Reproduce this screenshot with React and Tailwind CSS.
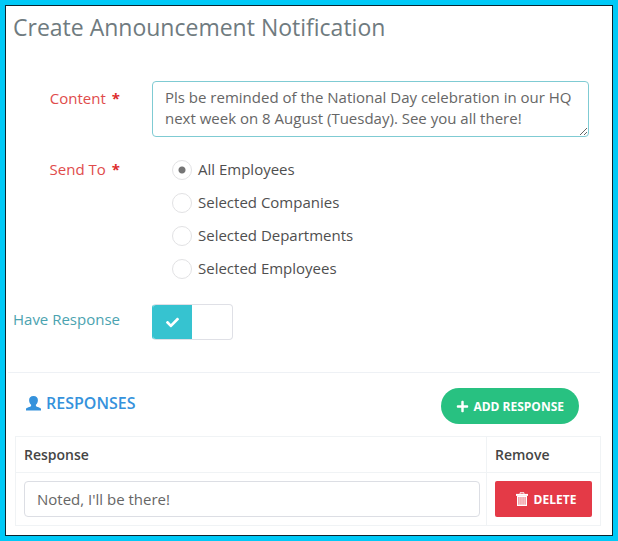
import React, { useState } from 'react';
import { FaCheck, FaPlus } from 'react-icons/fa';

const sendOptions = [
  { value: 'all', label: 'All Employees' },
  { value: 'companies', label: 'Selected Companies' },
  { value: 'departments', label: 'Selected Departments' },
  { value: 'employees', label: 'Selected Employees' }
];

const UserIcon = () => (
  <svg width="15" height="15" viewBox="0 0 15 15" fill="currentColor" aria-hidden="true">
    <path d="M7.500 0C10.400 0 12 1.700 11.900 4.200C11.800 6.200 11 7.800 9.900 8.700V10C10.300 10.900 15 11.400 15 13.200V14.500H0V13.200C0 11.400 4.700 10.900 5.100 10V8.700C4 7.800 3.200 6.200 3.100 4.200C3 1.700 4.600 0 7.500 0Z" />
  </svg>
);

const TrashIcon = () => (
  <svg width="12" height="15" viewBox="0 0 12 15" fill="none" stroke="currentColor" aria-hidden="true">
    <path d="M4 1.800V.8H8V1.800" />
    <path d="M0 2.900H12" strokeWidth="2" />
    <path d="M1.600 4.500H10.400V13.400H1.600Z" fill="currentColor" fillOpacity=".45" strokeWidth="1.200" />
    <path d="M3.900 5V13M6 5V13M8.100 5V13" strokeWidth="1" strokeOpacity=".7" />
  </svg>
);

const Required = () => <span className="ml-[6px] font-bold text-[#dd2c2c]">*</span>;

export default function App() {
  const [content, setContent] = useState(
    'Pls be reminded of the National Day celebration in our HQ next week on 8 August (Tuesday). See you all there!'
  );
  const [sendTo, setSendTo] = useState('all');
  const [haveResponse, setHaveResponse] = useState(true);
  const [responses, setResponses] = useState(["Noted, I'll be there!"]);

  const addResponse = () => setResponses([...responses, '']);
  const removeResponse = (index) => setResponses(responses.filter((_, i) => i !== index));
  const updateResponse = (index, value) => setResponses(responses.map((r, i) => (i === index ? value : r)));

  return (
    <div className="min-h-screen bg-[#00c9f7] p-[5px] pb-[6px] font-['Open_Sans',sans-serif] text-[15px] leading-[21px] text-[#4f4f4f]">
      <main className="border border-[#0b2530] bg-white pb-[9px]">
        <h1 className="px-[7px] pt-[5px] text-[23px] leading-8 text-[#6f7b80]">Create Announcement Notification</h1>

        <form>
          <div className="mt-[38px] grid grid-cols-[114px_1fr] gap-x-8 pr-[23px]">
            <label htmlFor="content" className="pt-[7px] text-right text-[#e04b4b]">
              Content<Required />
            </label>
            <textarea
              id="content"
              rows={2}
              value={content}
              onChange={(e) => setContent(e.target.value)}
              className="block h-14 w-full resize-y overflow-hidden rounded-[4px] border border-[#7fcbd3] px-3 py-[5px] text-[#666] outline-none"
            />
          </div>

          <fieldset className="mt-4 grid grid-cols-[114px_1fr] gap-x-8 pr-[23px]">
            <div id="send-to" className="pt-[6px] text-right text-[#e04b4b]">
              Send To<Required />
            </div>
            <div role="radiogroup" aria-labelledby="send-to" className="pl-5">
              {sendOptions.map((option) => (
                <label key={option.value} className="flex h-[33px] items-center gap-[6px]">
                  <input
                    type="radio"
                    name="sendTo"
                    value={option.value}
                    checked={sendTo === option.value}
                    onChange={() => setSendTo(option.value)}
                    className="size-5 shrink-0 appearance-none rounded-full border border-[#e2e2e4] bg-white checked:bg-[radial-gradient(circle,#757575_3px,transparent_4px)]"
                  />
                  {option.label}
                </label>
              ))}
            </div>
          </fieldset>

          <div className="mt-[19px] grid grid-cols-[114px_1fr] gap-x-8 pr-[23px]">
            <label htmlFor="have-response" className="pt-[5px] text-right whitespace-nowrap text-[#4ba3b0]">
              Have Response
            </label>
            <label className="flex h-9 w-[81px] overflow-hidden rounded-[4px] border border-[#dfe0e6] has-checked:border-l-[#36c3d0]">
              <input
                id="have-response"
                type="checkbox"
                checked={haveResponse}
                onChange={(e) => setHaveResponse(e.target.checked)}
                className="peer sr-only"
              />
              <span className="hidden w-[39px] items-center justify-center bg-[#36c3d0] text-white peer-checked:flex">
                <FaCheck size={13} />
              </span>
            </label>
          </div>
        </form>

        <hr className="mt-8 mr-3 ml-[2px] border-[#eef1f5]" />

        <section className="pr-[11px] pl-[9px]">
          <div className="flex items-center justify-between pt-[15px] pr-[22px] pb-3 pl-[11px]">
            <h2 className="flex items-center gap-[5px] pb-[6px] text-[16px] font-semibold text-[#3592dc]">
              <UserIcon />
              RESPONSES
            </h2>
            <button
              type="button"
              onClick={addResponse}
              className="flex h-9 items-center gap-1 rounded-full bg-[#28c181] px-[15px] text-[12px] font-bold text-white"
            >
              <FaPlus size={13} />
              ADD RESPONSE
            </button>
          </div>

          <table className="w-full border-collapse border border-[#f0f3f5]">
            <thead>
              <tr className="text-left text-[14px] text-[#454545]">
                <th className="h-9 border border-[#f0f3f5] px-2 font-semibold">Response</th>
                <th className="w-[114px] border border-[#f0f3f5] px-2 font-semibold">Remove</th>
              </tr>
            </thead>
            <tbody>
              {responses.map((response, index) => (
                <tr key={index}>
                  <td className="border border-[#f0f3f5] py-2 pr-[6px] pl-2">
                    <input
                      type="text"
                      aria-label="Response"
                      value={response}
                      onChange={(e) => updateResponse(index, e.target.value)}
                      className="block h-9 w-full rounded-[4px] border border-[#dcdee4] px-3 text-[#666] outline-none"
                    />
                  </td>
                  <td className="border border-[#f0f3f5] px-2 py-2">
                    <button
                      type="button"
                      onClick={() => removeResponse(index)}
                      className="flex h-9 w-full items-center justify-center gap-[6px] rounded-[2px] bg-[#e43a47] pl-[5px] text-[12px] font-bold text-white"
                    >
                      <TrashIcon />
                      DELETE
                    </button>
                  </td>
                </tr>
              ))}
            </tbody>
          </table>
        </section>
      </main>
    </div>
  );
}
